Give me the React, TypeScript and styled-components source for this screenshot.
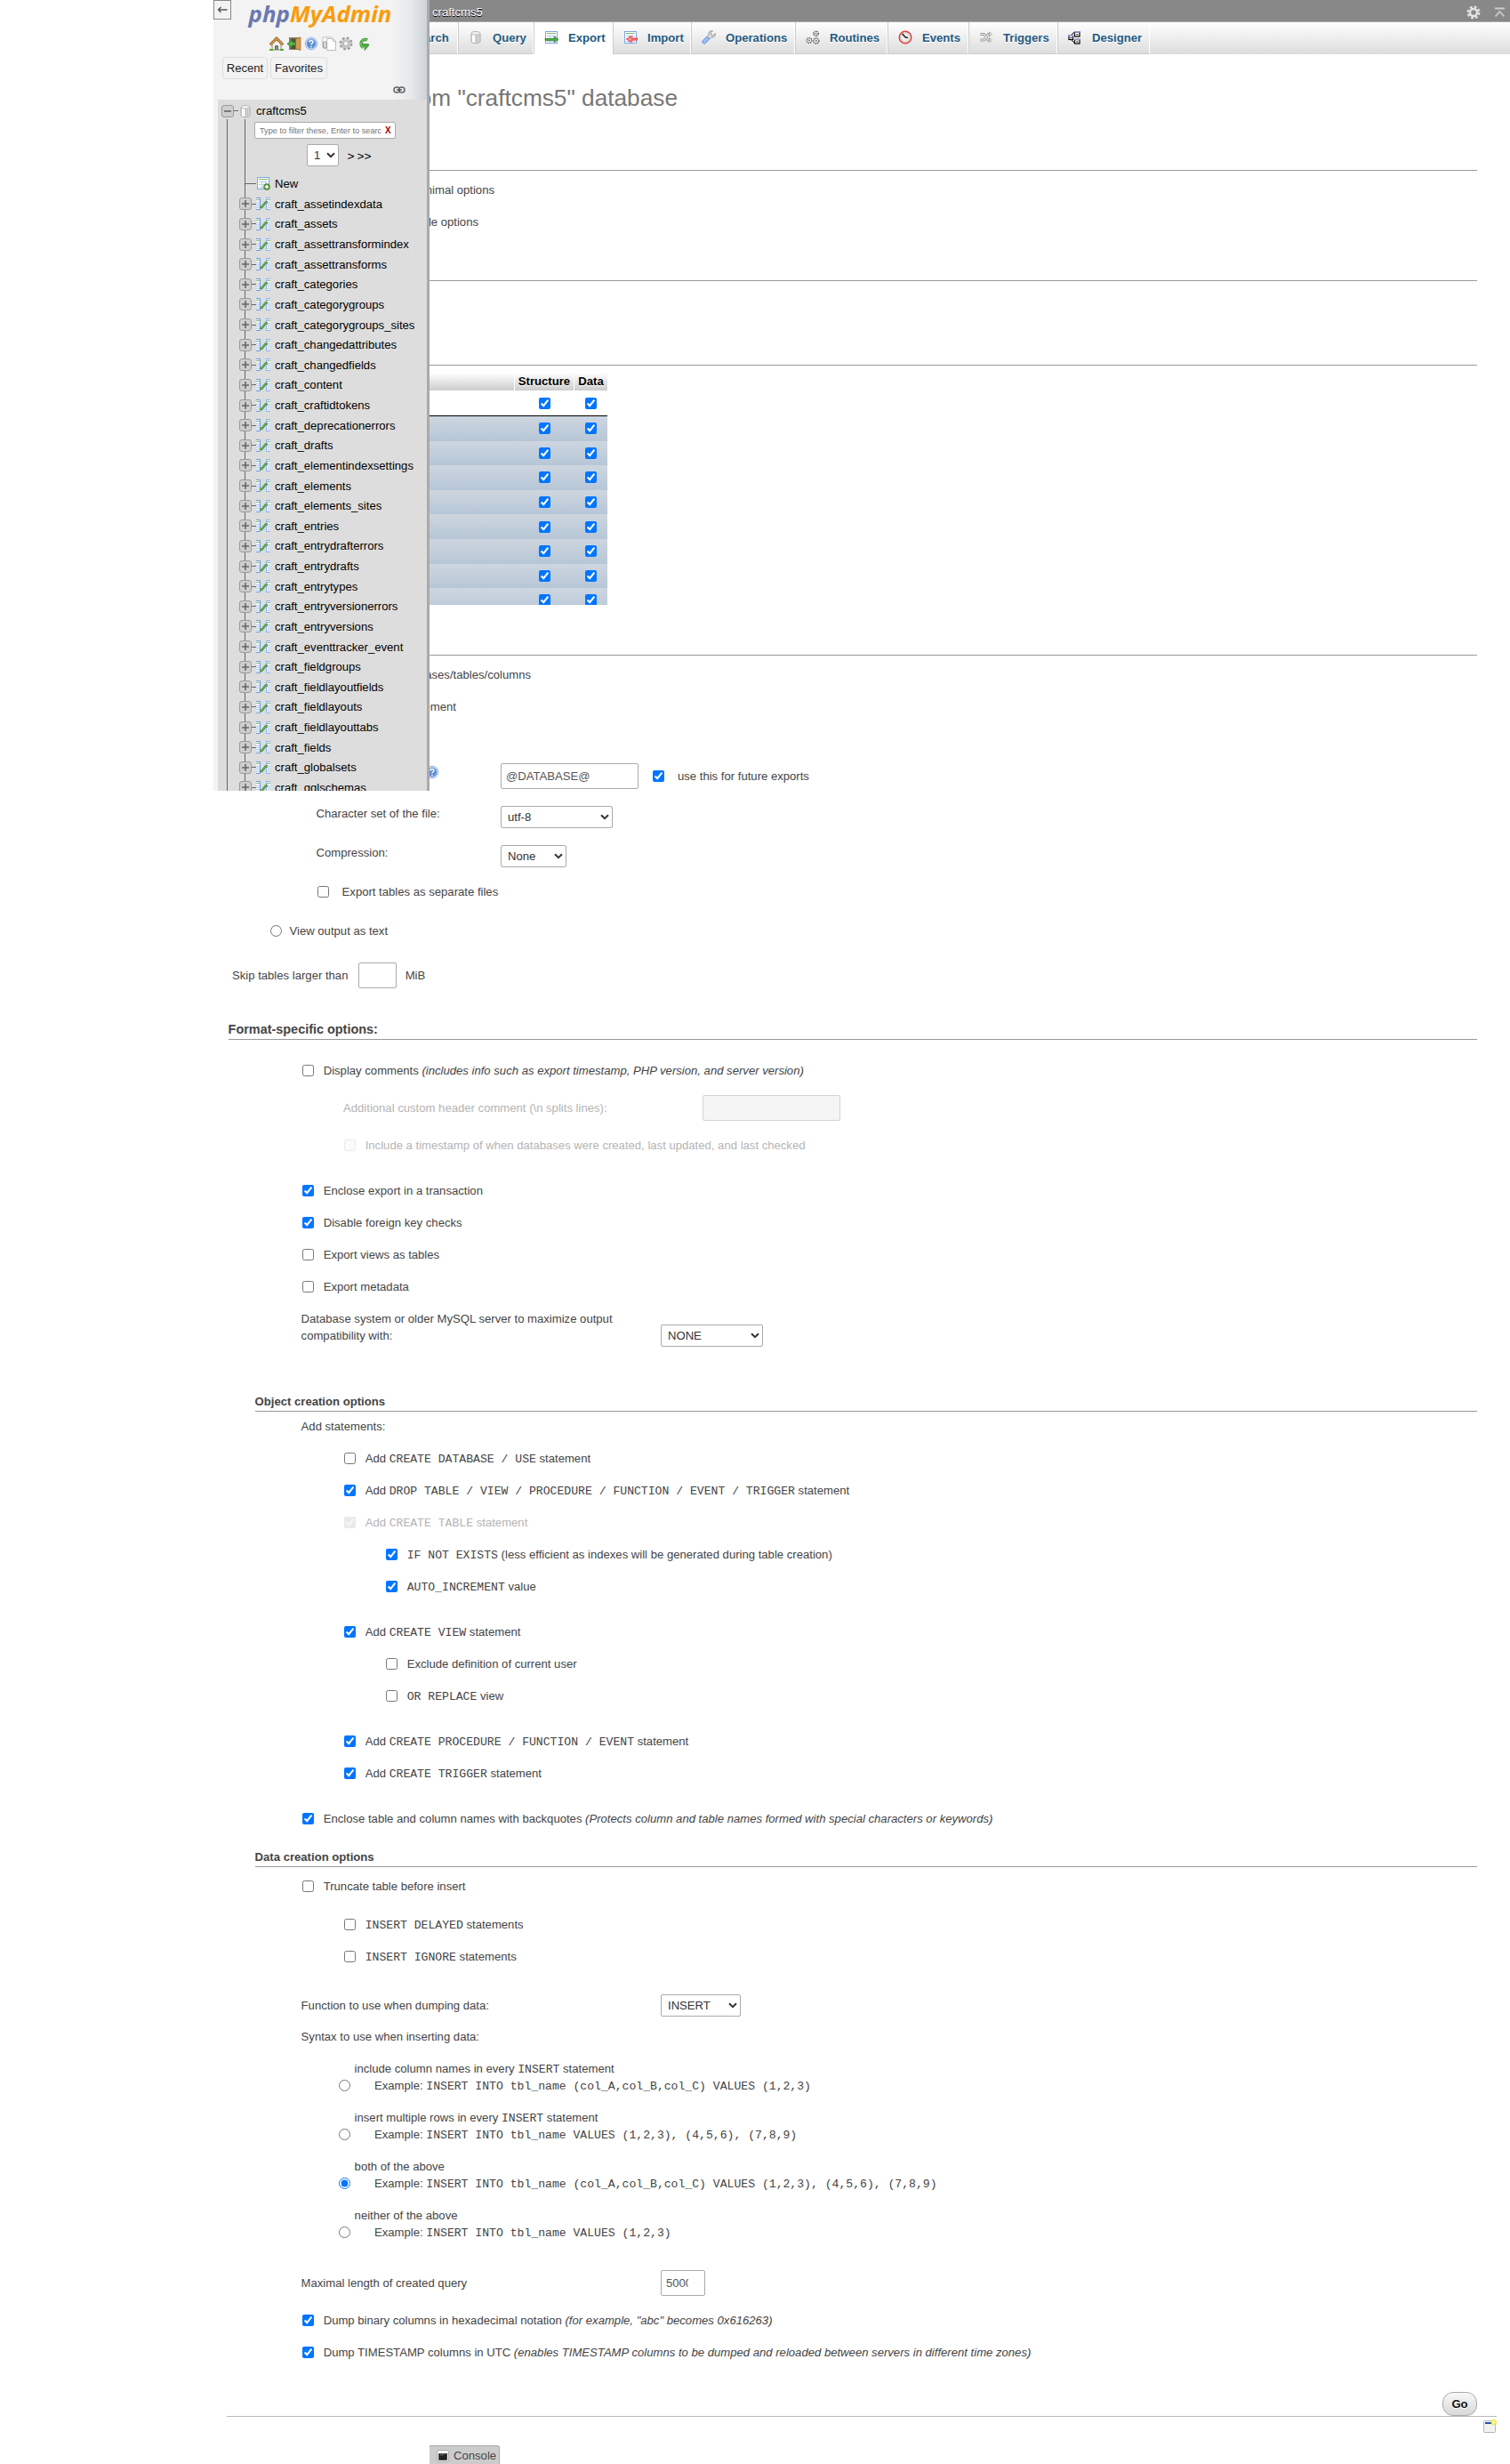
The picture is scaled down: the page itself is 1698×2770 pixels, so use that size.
import React from "react";
import styled, { createGlobalStyle } from "styled-components";

const GlobalStyle = createGlobalStyle`
  * { box-sizing: border-box; }
  html, body { margin: 0; background: #fff; }
  body {
    font-family: "Liberation Sans", Arial, Helvetica, sans-serif;
    font-size: 13.12px;
    color: #444;
    overflow-x: hidden;
  }
  input { margin: 0; font-family: inherit; }
`;

/* ---------- page shell ---------- */

const Page = styled.div`
  position: relative;
  width: 1698px;
  height: 2770px;
  padding-left: 240px;
  overflow: hidden;
  background: #fff;
`;

const TopBar = styled.header`
  display: flex;
  align-items: center;
  justify-content: space-between;
  height: 25px;
  padding: 3px 5px 0 246px;
  background: #888;
  border-bottom: 1px solid #aaa;
  color: #fff;
  text-shadow: 0 1px 0 #000;
`;

const TopIcons = styled.div`
  display: flex;
  align-items: center;
  gap: 15px;
`;

const TabBar = styled.nav`
  display: flex;
  height: 36px;
  padding-left: 182px;
  background: linear-gradient(#fff, #dcdcdc);
`;

const Tab = styled.a<{ $w: number; $active?: boolean }>`
  display: flex;
  align-items: center;
  gap: 11px;
  flex: none;
  width: ${(p) => p.$w}px;
  padding: 0 0 1px 11px;
  border-left: 1px solid #ccc;
  border-right: 1px solid #fff;
  border-bottom: 1px solid ${(p) => (p.$active ? "#fff" : "#ccc")};
  background: ${(p) => (p.$active ? "#fff" : "transparent")};
  color: #235a81;
  font-weight: bold;
  text-shadow: 0 1px 0 #fff;
  white-space: nowrap;
`;

const Content = styled.main`
  display: flex;
  flex-direction: column;
  padding-right: 37px;
`;

const Title = styled.h2`
  width: 522px;
  height: 31px;
  margin: 34px 0 0;
  font-size: 26.24px;
  line-height: 31px;
  font-weight: normal;
  color: #777;
  text-align: right;
  white-space: nowrap;
`;

const Rule = styled.hr<{ $mt: number }>`
  flex: none;
  width: 1404px;
  height: 1px;
  margin: ${(p) => p.$mt}px 0 0 17px;
  border: 0;
  background: #999;
`;

const TailLabel = styled.div<{ $mt: number; $end: number }>`
  width: ${(p) => p.$end}px;
  height: 21px;
  margin-top: ${(p) => p.$mt}px;
  line-height: 21px;
  text-align: right;
  white-space: nowrap;
`;

/* ---------- form rows ---------- */

const Row = styled.div<{ $x: number; $mt?: number; $h?: number; $align?: string }>`
  display: flex;
  flex: none;
  align-items: ${(p) => p.$align ?? "center"};
  height: ${(p) => p.$h ?? 21}px;
  margin-top: ${(p) => p.$mt ?? 15}px;
  padding-left: ${(p) => p.$x}px;
  white-space: nowrap;
`;

const Label = styled.label<{ $w?: number; $muted?: boolean; $raise?: boolean }>`
  flex: none;
  width: ${(p) => (p.$w ? p.$w + "px" : "auto")};
  margin-top: ${(p) => (p.$raise ? "-1px" : "0")};
  line-height: 19px;
  color: ${(p) => (p.$muted ? "#b4b4b4" : "inherit")};
  white-space: pre;
`;

const Check = styled.input`
  flex: none;
  width: 13px;
  height: 13px;
  &:disabled { opacity: 0.45; }
`;

const OptionLabel = styled(Label)<{ $gap?: number }>`
  margin-left: ${(p) => p.$gap ?? 10.7}px;
`;

const Code = styled.code`
  font-family: "Liberation Mono", "Courier New", monospace;
  font-size: 13.12px;
`;

const Field = styled.div<{ $w: number; $disabled?: boolean }>`
  display: flex;
  flex: none;
  align-items: center;
  width: ${(p) => p.$w}px;
  height: 29px;
  padding: 0 5px;
  border: 1px solid ${(p) => (p.$disabled ? "#d4d4d4" : "#aaa")};
  border-radius: 2px;
  background: ${(p) => (p.$disabled ? "#f5f5f5" : "#fff")};
  color: #555;
`;

const FieldValue = styled.span<{ $w?: number }>`
  width: ${(p) => (p.$w ? p.$w + "px" : "auto")};
  overflow: hidden;
`;

const SelectBox = styled.div<{ $w: number; $pad?: number }>`
  display: flex;
  flex: none;
  align-items: center;
  justify-content: space-between;
  width: ${(p) => p.$w}px;
  height: 25px;
  padding: 0 3px 0 ${(p) => p.$pad ?? 7}px;
  border: 1px solid #aaa;
  border-radius: 2px;
  background: #fff;
  color: #333;
`;

const SectionHead = styled.h3<{ $x: number; $mt: number; $big?: boolean }>`
  flex: none;
  width: ${(p) => 1421 - p.$x}px;
  height: ${(p) => (p.$big ? 23 : 22)}px;
  margin: ${(p) => p.$mt}px 0 0 ${(p) => p.$x}px;
  border-bottom: 1px solid #999;
  font-size: ${(p) => (p.$big ? 14.43 : 13.12)}px;
  line-height: 22px;
  font-weight: bold;
`;

const SyntaxItem = styled.div<{ $mt: number }>`
  display: grid;
  flex: none;
  grid-template-columns: 17.6px 22.4px auto;
  grid-template-rows: 19px 19px;
  align-items: center;
  margin-top: ${(p) => p.$mt}px;
  padding-left: 141px;
  line-height: 19px;
  white-space: nowrap;
`;

const SyntaxName = styled.span`
  grid-column: 2 / 4;
`;

const SyntaxExample = styled.span`
  grid-column: 3;
`;

/* ---------- tables picker ---------- */

const TablesPicker = styled.div`
  flex: none;
  width: 443px;
  height: 261px;
  margin-top: 8px;
  padding-left: 60px;
  overflow: hidden;
`;

const PickerRow = styled.div`
  display: grid;
  grid-template-columns: 279px 67px 37px;
  height: 27.6px;
  background: linear-gradient(#ced6df, #b6c6d7);
`;

const PickerHead = styled(PickerRow)`
  height: 20px;
  background: #fff;
  color: #000;
  font-weight: bold;
  text-align: center;
`;

const PickerHeadCell = styled.div`
  padding-top: 1px;
  border-right: 1px solid #fff;
  background: linear-gradient(#fff, #ccc);
  line-height: 18px;
  text-shadow: 0 1px 0 #fff;
  &:last-child { border-right: 0; }
`;

const PickerAll = styled(PickerRow)`
  height: 29px;
  border-bottom: 1px solid #000;
  background: #fff;
`;

const PickerCell = styled.div`
  display: flex;
  align-items: center;
  justify-content: center;
`;

/* ---------- footer ---------- */

const GoLine = styled.div`
  display: flex;
  flex: none;
  justify-content: flex-end;
  height: 27px;
  margin-top: 34px;
`;

const GoButton = styled.button`
  width: 39px;
  height: 27px;
  padding: 0;
  border: 1px solid #aaa;
  border-radius: 12px;
  background: linear-gradient(#f8f8f8, #d8d8d8);
  color: #111;
  font: bold 13.12px "Liberation Sans", Arial, sans-serif;
  text-shadow: 0 1px 0 #fff;
`;

const Footer = styled.footer`
  display: flex;
  justify-content: flex-end;
  width: 1428px;
  height: 33px;
  margin-left: 15px;
  padding: 3px 0 0;
  border-top: 1px solid #bbb;
`;

const ConsoleTab = styled.div`
  display: flex;
  align-items: center;
  gap: 5px;
  width: 79px;
  height: 21px;
  margin-left: 243px;
  padding: 1px 0 0 8px;
  border-top: 1px solid #aaa;
  border-right: 1px solid #aaa;
  border-radius: 0 3px 0 0;
  background: #ccc;
`;

/* ---------- navigation panel ---------- */

const Sidebar = styled.aside`
  position: absolute;
  left: 240px;
  top: 0;
  width: 243px;
  height: 889px;
  overflow: hidden;
  border-right: 3px solid #aaa;
  background: linear-gradient(to right, #f3f3f3 200px, #e6e9eb 222px, #cdd2d7 240px);
  color: #000;
`;

const SidebarTop = styled.div`
  display: flex;
  height: 37px;
`;

const Collapse = styled.div`
  display: flex;
  align-items: center;
  justify-content: center;
  width: 20px;
  height: 22px;
  border: 1px solid #888;
  background: #f3f3f3;
`;

const LogoBox = styled.div`
  margin-left: 18px;
`;

const IconRow = styled.div`
  display: flex;
  gap: 3.5px;
  height: 20px;
  padding: 4px 0 0 63px;
`;

const ButtonRow = styled.div`
  display: flex;
  gap: 3px;
  padding: 7px 0 0 10px;
`;

const NavButton = styled.div<{ $w: number }>`
  width: ${(p) => p.$w}px;
  height: 25px;
  border: 1px solid #ddd;
  border-radius: 4px;
  line-height: 24px;
  text-align: center;
  color: #222;
`;

const LinkRow = styled.div`
  display: flex;
  justify-content: flex-end;
  height: 23px;
  padding: 8px 24px 0 0;
`;

const Tree = styled.div`
  height: 777px;
  margin-left: 5px;
  padding: 3px 0 0 4px;
  background: #ddd;
`;

const DbRow = styled.div`
  display: flex;
  align-items: center;
  height: 19px;
`;

const Dash = styled.i<{ $w: number }>`
  flex: none;
  width: ${(p) => p.$w}px;
  height: 1px;
  background: #666;
`;

const NodeName = styled.span<{ $ml?: number }>`
  margin-left: ${(p) => p.$ml ?? 5}px;
  white-space: nowrap;
`;

const Toggle = styled.span`
  display: flex;
  flex: none;
  width: 14px;
  height: 14px;
  border: 1px solid #999;
  border-radius: 3px;
  background: #cecece;
`;

const OuterBranch = styled.div`
  margin-left: 6px;
  padding-left: 19px;
  border-left: 1px solid #666;
`;

const InnerBranch = styled.div`
  height: 760px;
  padding-top: 3px;
  border-left: 1px solid #666;
`;

const FilterBox = styled.div`
  display: flex;
  align-items: center;
  width: 159px;
  height: 19px;
  margin-left: 10px;
  padding-left: 5px;
  border: 1px solid #aaa;
  border-radius: 2px;
  background: #fff;
  color: #757575;
  font-size: 9.18px;
`;

const FilterText = styled.span`
  width: 137px;
  overflow: hidden;
  white-space: nowrap;
`;

const FilterClear = styled.b`
  margin-left: 4px;
  color: #a00;
  font-size: 10px;
`;

const Pager = styled.div`
  display: flex;
  align-items: center;
  height: 25px;
  margin: 6px 0 0 69px;
`;

const PagerLink = styled.span<{ $ml: number }>`
  margin-left: ${(p) => p.$ml}px;
  padding-top: 1px;
  font-size: 13.6px;
`;

const NewRow = styled.div`
  display: flex;
  align-items: center;
  height: 22px;
  margin: 8px 0 1px;
`;

const TreeRow = styled.div`
  display: flex;
  align-items: center;
  height: 22.64px;
  margin-left: -7px;
`;

const Svg = styled.svg`
  display: block;
  flex: none;
`;

/* ---------- drawings ---------- */

const Icon = ({ size = 16, children }: { size?: number; children: React.ReactNode }) => (
  <Svg width={size} height={size} viewBox="0 0 16 16" fill="none">
    {children}
  </Svg>
);

const Chevron = () => (
  <Svg width="10" height="7" viewBox="0 0 10 7" fill="none">
    <path d="M1 1.2 L5 5.2 L9 1.2" stroke="#333" strokeWidth="2" />
  </Svg>
);

const Sheet = () => (
  <>
    <rect x="1.5" y="1.5" width="13" height="13" fill="#fff" stroke="#7fa6dc" />
    <path d="M3 3.5h10" stroke="#7dbb6c" />
    <path d="M3 6.5h10M3 9.5h10M3 12.5h10M6.5 5v9M10.5 5v9" stroke="#b9cdec" />
  </>
);

const DbIcon = () => (
  <Icon>
    <path d="M3 3.5v9c0 1.2 2 2 5 2s5-.8 5-2v-9" fill="#d9d9d9" stroke="#aaa" />
    <path d="M4 4v8.5c0 .8 1.5 1.3 3 1.4V5z" fill="#fff" />
    <ellipse cx="8" cy="3.3" rx="5" ry="1.8" fill="#f4f4f4" stroke="#b5b5b5" />
    <path d="M8.5 6v7M10.5 6v7" stroke="#bdbdbd" />
  </Icon>
);

const ExportIcon = () => (
  <Icon>
    <Sheet />
    <path d="M1 9.3h10.500V7l4.500 3.300-4.500 3.300v-2.200H1z" fill="#4fae48" stroke="#2b7a2a" strokeWidth=".7" />
  </Icon>
);

const ImportIcon = () => (
  <Icon>
    <Sheet />
    <path d="M16 9H9V6.500L3.500 10 9 13.500V11h7z" fill="#f59a9a" stroke="#e22" strokeWidth=".9" />
  </Icon>
);

const WrenchIcon = () => (
  <Icon>
    <path d="M15.300 3.500 12.800 5.800 10.500 5l-.4-2.200L12.500.8C9.500 0 7.300 2 8 5L6 7.500l2.500 2.300L11 8c3 .3 5-1.700 4.300-4.500z" fill="#ddd" stroke="#888" strokeWidth=".8" />
    <path d="M6 7 1.300 11.500c-1.600 2 .900 4.600 3 3L8.800 9.800z" fill="#9fbdf3" stroke="#5f86d0" strokeWidth=".9" />
  </Icon>
);

const RoutinesIcon = () => (
  <Icon>
    <g stroke="#444" strokeWidth="1.300" strokeDasharray="1.300 .9" fill="#eee">
      <circle cx="11.500" cy="3.800" r="2.700" />
      <circle cx="4" cy="11.500" r="2.900" />
      <circle cx="11.800" cy="12" r="3" />
    </g>
    <circle cx="11.500" cy="3.800" r="1" fill="#777" />
    <circle cx="4" cy="11.500" r="1" fill="#777" />
    <circle cx="11.800" cy="12" r="1" fill="#777" />
  </Icon>
);

const ClockIcon = () => (
  <Icon>
    <circle cx="8" cy="8" r="6.800" fill="#eee" stroke="#e5403a" strokeWidth="1.500" />
    <circle cx="8" cy="8" r="5.300" stroke="#bbb" strokeWidth=".8" />
    <path d="M4.500 4 8.300 8 11 8.500" stroke="#222" strokeWidth="1.500" />
  </Icon>
);

const TriggersIcon = () => (
  <Icon>
    <path d="M1.500 4.500h4l4.500 6.500h3M1.500 11h4l4.500-6.500h3" stroke="#999" strokeWidth="2.800" />
    <path d="M2 4.500h3.500l4.500 6.500h3M2 11h3.500l4.500-6.500h3" stroke="#eee" strokeWidth="1.200" />
    <path d="m11.500 2 3 2.500-3 2.500zM11.500 8.500l3 2.500-3 2.500z" fill="#eee" stroke="#999" strokeWidth=".8" />
  </Icon>
);

const DesignerIcon = () => (
  <Icon>
    <path d="M3 6 7 2h3M3 10l4 4h3" stroke="#000" />
    <g fill="#fff" stroke="#000" strokeWidth="1.200">
      <rect x="1" y="6" width="4.500" height="4.500" />
      <rect x="7.500" y="2" width="5.500" height="5" />
      <rect x="7.500" y="10.500" width="5.500" height="4.500" />
    </g>
    <path d="M.4 6h5.700M6.900 1.800h6.700M6.900 10.300h6.700" stroke="#99c" strokeWidth="1.800" />
    <path d="M2.600 8.500h1.500M9.300 4.800h2M9.300 13h2" stroke="#000" />
  </Icon>
);

const GearIcon = ({ light }: { light?: boolean }) => (
  <Icon>
    <circle cx="8" cy="8" r="6.200" stroke={light ? "#e4e4e4" : "#999"} strokeWidth="2.600" strokeDasharray="2.600 2.270" />
    <circle cx="8" cy="8" r="4" stroke={light ? "#e4e4e4" : "#aaa"} strokeWidth={light ? 2.4 : 3.2} />
    {!light && <circle cx="8" cy="8" r="4.300" stroke="#d6d6d6" strokeWidth="1.400" />}
  </Icon>
);

const ToTopIcon = () => (
  <Svg width="13" height="12" viewBox="0 0 13 12" fill="none">
    <path d="M1 1.500h11M1.500 10.500l5-5.500 5 5.500" stroke="#ccc" strokeWidth="1.800" />
  </Svg>
);

const HelpIcon = () => (
  <Icon>
    <circle cx="8" cy="8" r="6.800" fill="#c9daf2" stroke="#8aa8d8" strokeWidth=".8" />
    <circle cx="8" cy="8" r="5.200" fill="#5c8fd6" />
    <path d="M6 6.500c0-2.600 4-2.500 4-.2 0 1.500-2 1.400-2 3M8 10.700v1.500" stroke="#fff" strokeWidth="1.500" />
  </Icon>
);

const HomeIcon = () => (
  <Icon>
    <path d="M3 8v7h10V8L8 3.500z" fill="#f3f0e8" stroke="#8a8a7a" />
    <path d="M.8 9.300 8 2.200l7.200 7.100" stroke="#8a5a24" strokeWidth="3" />
    <path d="M1.200 8.900 8 2.300l6.800 6.600" stroke="#dc9a52" strokeWidth="1.500" />
    <path d="M6.500 15v-4.500h3V15" fill="#888" stroke="#555" strokeWidth=".8" />
    <path d="M0 15h4M12 15h4" stroke="#57a639" strokeWidth="1.800" />
  </Icon>
);

const ExitIcon = () => (
  <Icon>
    <path d="M2 1h13v14H2z" fill="#8b8162" />
    <path d="M4 2.500h6V14H4z" fill="#4f4f42" />
    <path d="M9.500 3 15 .8v14.700L9.500 14z" fill="#d79b4c" stroke="#a66a22" strokeWidth=".7" />
    <path d="M9 6.500H5.500V4L0 8.200l5.500 4.300V10H9z" fill="#5cb347" stroke="#2f7d27" strokeWidth=".8" />
  </Icon>
);

const DocsIcon = () => (
  <Icon>
    <rect x="1" y=".8" width="10" height="12" rx="1" fill="#fff" stroke="#bbb" />
    <path d="M5.500 2.500h7l3 3v10h-10z" fill="#fff" stroke="#bbb" />
    <path d="M12.500 2.500v3h3" stroke="#bbb" />
    <rect x="1.500" y="6" width="4" height="7" rx="1" fill="#d8d8d8" stroke="#999" />
  </Icon>
);

const RefreshIcon = () => (
  <Icon>
    <path d="M12 4A4.600 4.600 0 1 0 7.500 12.300" stroke="#2f8a2a" strokeWidth="3.400" />
    <path d="M12 4A4.600 4.600 0 1 0 7.500 12.300" stroke="#71c45e" strokeWidth="2" />
    <path d="M6.500 8.500H13.500V10.500L9 15.500v-3.500z" fill="#4fae40" stroke="#2f8a2a" strokeWidth=".7" />
  </Icon>
);

const LinkIcon = () => (
  <Svg width="14" height="8" viewBox="0 0 14 8" fill="none">
    <rect x="1" y="1" width="6.500" height="6" rx="3" stroke="#666" strokeWidth="1.600" />
    <rect x="6.500" y="1" width="6.500" height="6" rx="3" stroke="#666" strokeWidth="1.600" />
    <path d="M4 4h6" stroke="#555" strokeWidth="1.400" />
  </Svg>
);

const NewTableIcon = () => (
  <Icon>
    <Sheet />
    <circle cx="12" cy="12" r="3.500" fill="#5a9a35" stroke="#3d7a20" strokeWidth=".6" />
    <path d="M12 9.900v4.200M9.900 12h4.200" stroke="#fff" strokeWidth="1.500" />
  </Icon>
);

const TableIcon = () => (
  <Icon>
    <path d="M0 1.500h4.500v13H0" fill="#eef3fc" stroke="#6f9bdb" />
    <path d="M16 1.500h-4.500v13H16" fill="#eef3fc" stroke="#8fb2e6" />
    <path d="M0 3.500h4M12 3.500h4" stroke="#8cc27c" />
    <path d="M0 6.500h4M0 8.500h4M0 10.500h4M0 12.500h4M13 6.500h3M13 8.500h3M13 10.500h3M13 12.500h3" stroke="#bccfee" />
    <path d="M4 12h2.300l4.400-5.500h2.300" stroke="#3d8a3d" strokeWidth="2.400" />
    <path d="M4 12h2.300l4.400-5.500h2.300" stroke="#6bb45e" strokeWidth="1.200" />
  </Icon>
);

const PlusMinus = ({ open }: { open?: boolean }) => (
  <Toggle>
    <Svg width="12" height="12" viewBox="0 0 12 12">
      <path d={open ? "M2 6h8" : "M2 6h8M6 2v8"} stroke="#666" strokeWidth="1.600" />
    </Svg>
  </Toggle>
);

const WindowIcon = () => (
  <Icon>
    <rect x="1.500" y="1.500" width="13" height="13" rx="1" fill="#f2f2f0" stroke="#b5b5b0" />
    <path d="M3 4h9" stroke="#1f56a8" strokeWidth="2" />
    <circle cx="12.800" cy="3" r="2.300" fill="#fff" stroke="#f3ea2a" strokeWidth="1.700" />
  </Icon>
);

const ConsoleIcon = () => (
  <Icon size={14}>
    <rect x=".8" y=".8" width="14.400" height="14.400" rx="1" fill="#fff" stroke="#999" />
    <path d="M2.500 4.500h11v9h-11z" fill="#222" />
    <path d="M2.500 4.500h11L6 8z" fill="#555" />
  </Icon>
);

const Logo = () => (
  <Svg width="166" height="36" viewBox="0 0 166 36">
    <text
      x="1.500"
      y="25.300"
      fontFamily="'Open Sans', 'Noto Sans', sans-serif"
      fontSize="25"
      fontWeight="700"
      fontStyle="italic"
      textLength="161"
      lengthAdjust="spacingAndGlyphs"
    >
      <tspan fill="#6c78af">php</tspan>
      <tspan fill="#f89c0e">MyAdmin</tspan>
    </text>
  </Svg>
);

/* ---------- composed parts ---------- */

const tables = [
  "craft_assetindexdata", "craft_assets", "craft_assettransformindex", "craft_assettransforms",
  "craft_categories", "craft_categorygroups", "craft_categorygroups_sites", "craft_changedattributes",
  "craft_changedfields", "craft_content", "craft_craftidtokens", "craft_deprecationerrors",
  "craft_drafts", "craft_elementindexsettings", "craft_elements", "craft_elements_sites",
  "craft_entries", "craft_entrydrafterrors", "craft_entrydrafts", "craft_entrytypes",
  "craft_entryversionerrors", "craft_entryversions", "craft_eventtracker_event", "craft_fieldgroups",
  "craft_fieldlayoutfields", "craft_fieldlayouts", "craft_fieldlayouttabs", "craft_fields",
  "craft_globalsets", "craft_gqlschemas",
];

type OptionProps = {
  x: number;
  mt?: number;
  on?: boolean;
  off?: boolean;
  radio?: boolean;
  gap?: number;
  children: React.ReactNode;
};

const Option = ({ x, mt, on, off, radio, gap, children }: OptionProps) => (
  <Row $x={x} $mt={mt}>
    <Check type={radio ? "radio" : "checkbox"} defaultChecked={on} disabled={off} />
    <OptionLabel $gap={gap} $muted={off}>{children}</OptionLabel>
  </Row>
);

const Select = ({ w, pad, children }: { w: number; pad?: number; children: React.ReactNode }) => (
  <SelectBox $w={w} $pad={pad}>
    <span>{children}</span>
    <Chevron />
  </SelectBox>
);

const Syntax = ({ mt, on, name, example }: { mt: number; on?: boolean; name: React.ReactNode; example: string }) => (
  <SyntaxItem $mt={mt}>
    <span />
    <SyntaxName>{name}</SyntaxName>
    <Check type="radio" defaultChecked={on} />
    <span />
    <SyntaxExample>Example: <Code>{example}</Code></SyntaxExample>
  </SyntaxItem>
);

const Navigation = () => (
  <Sidebar>
    <SidebarTop>
      <Collapse>
        <Svg width="12" height="8" viewBox="0 0 12 8" fill="none">
          <path d="M11.500 4H2M4.500 1 1.500 4l3 3" stroke="#555" strokeWidth="1.400" />
        </Svg>
      </Collapse>
      <LogoBox><Logo /></LogoBox>
    </SidebarTop>
    <IconRow>
      <HomeIcon />
      <ExitIcon />
      <HelpIcon />
      <DocsIcon />
      <GearIcon />
      <RefreshIcon />
    </IconRow>
    <ButtonRow>
      <NavButton $w={51}>Recent</NavButton>
      <NavButton $w={64}>Favorites</NavButton>
    </ButtonRow>
    <LinkRow><LinkIcon /></LinkRow>
    <Tree>
      <DbRow>
        <PlusMinus open />
        <Dash $w={5} />
        <DbIcon />
        <NodeName $ml={4}>craftcms5</NodeName>
      </DbRow>
      <OuterBranch>
        <InnerBranch>
          <FilterBox>
            <FilterText>Type to filter these, Enter to search</FilterText>
            <FilterClear>X</FilterClear>
          </FilterBox>
          <Pager>
            <Select w={36}>1</Select>
            <PagerLink $ml={9.5}>&gt;</PagerLink>
            <PagerLink $ml={3}>&gt;&gt;</PagerLink>
          </Pager>
          <NewRow>
            <Dash $w={12} />
            <NewTableIcon />
            <NodeName>New</NodeName>
          </NewRow>
          {tables.map((name) => (
            <TreeRow key={name}>
              <PlusMinus />
              <Dash $w={5} />
              <TableIcon />
              <NodeName>{name}</NodeName>
            </TreeRow>
          ))}
        </InnerBranch>
      </OuterBranch>
    </Tree>
  </Sidebar>
);

const tabs = [
  { name: "Search", w: 93, icon: null },
  { name: "Query", w: 85, icon: <DbIcon /> },
  { name: "Export", w: 89, icon: <ExportIcon />, active: true },
  { name: "Import", w: 88, icon: <ImportIcon /> },
  { name: "Operations", w: 117, icon: <WrenchIcon /> },
  { name: "Routines", w: 104, icon: <RoutinesIcon /> },
  { name: "Events", w: 91, icon: <ClockIcon /> },
  { name: "Triggers", w: 100, icon: <TriggersIcon /> },
  { name: "Designer", w: 104, icon: <DesignerIcon /> },
];

export default function App() {
  return (
    <Page>
      <GlobalStyle />
      <TopBar>
        <span>craftcms5</span>
        <TopIcons>
          <GearIcon light />
          <ToTopIcon />
        </TopIcons>
      </TopBar>
      <TabBar>
        {tabs.map((t) => (
          <Tab key={t.name} $w={t.w} $active={t.active}>
            {t.icon ?? <Icon><circle cx="7" cy="7" r="5" stroke="#999" /></Icon>}
            {t.name}
          </Tab>
        ))}
      </TabBar>

      <Content>
        <Title>from "craftcms5" database</Title>
        <Rule $mt={65} />
        <TailLabel $mt={11} $end={316}>minimal options</TailLabel>
        <TailLabel $mt={15} $end={298}>possible options</TailLabel>
        <Rule $mt={55} />
        <Rule $mt={94} />

        <TablesPicker>
          <PickerHead>
            <PickerHeadCell />
            <PickerHeadCell>Structure</PickerHeadCell>
            <PickerHeadCell>Data</PickerHeadCell>
          </PickerHead>
          <PickerAll>
            <span />
            <PickerCell><Check type="checkbox" defaultChecked /></PickerCell>
            <PickerCell><Check type="checkbox" defaultChecked /></PickerCell>
          </PickerAll>
          {tables.slice(0, 8).map((name) => (
            <PickerRow key={name}>
              <span />
              <PickerCell><Check type="checkbox" defaultChecked /></PickerCell>
              <PickerCell><Check type="checkbox" defaultChecked /></PickerCell>
            </PickerRow>
          ))}
        </TablesPicker>

        <Rule $mt={56} />
        <TailLabel $mt={11} $end={357}>databases/tables/columns</TailLabel>
        <TailLabel $mt={15} $end={273}>statement</TailLabel>

        <Row $x={238} $mt={53} $h={29}>
          <Row $x={0} $mt={0} $h={25} $align="flex-start"><HelpIcon /></Row>
          <OptionLabel $gap={69} />
          <Field $w={155}><FieldValue>@DATABASE@</FieldValue></Field>
          <OptionLabel $gap={16} />
          <Check type="checkbox" defaultChecked />
          <OptionLabel $gap={15}>use this for future exports</OptionLabel>
        </Row>
        <Row $x={115.5} $mt={19} $h={25} $align="flex-start">
          <Label $w={207.5} $raise>Character set of the file:</Label>
          <Select w={126}>utf-8</Select>
        </Row>
        <Row $x={115.5} $mt={19} $h={25} $align="flex-start">
          <Label $w={207.5} $raise>Compression:</Label>
          <Select w={74}>None</Select>
        </Row>
        <Option x={117} mt={17} gap={14.6}>Export tables as separate files</Option>
        <Option x={64} mt={23} gap={8.5} radio>View output as text</Option>
        <Row $x={21} $mt={25} $h={29}>
          <Label $w={142}>Skip tables larger than</Label>
          <Field $w={43} />
          <OptionLabel $gap={9.7}>MiB</OptionLabel>
        </Row>

        <SectionHead $x={16.6} $mt={35} $big>Format-specific options:</SectionHead>
        <Option x={100} mt={24}>Display comments <i>(includes info such as export timestamp, PHP version, and server version)</i></Option>
        <Row $x={146} $mt={17} $h={29}>
          <Label $w={404} $muted>Additional custom header comment (\n splits lines):</Label>
          <Field $w={155} $disabled />
        </Row>
        <Option x={147} mt={17} off>Include a timestamp of when databases were created, last updated, and last checked</Option>
        <Option x={100} mt={30} on>Enclose export in a transaction</Option>
        <Option x={100} on>Disable foreign key checks</Option>
        <Option x={100}>Export views as tables</Option>
        <Option x={100}>Export metadata</Option>
        <Row $x={98.6} $mt={16} $h={41} $align="flex-end">
          <Row $x={0} $mt={0} $h={41} $align="flex-start">
            <Label $w={404.4}>{"Database system or older MySQL server to maximize output\ncompatibility with:"}</Label>
          </Row>
          <Select w={115}>NONE</Select>
        </Row>

        <SectionHead $x={46.6} $mt={51}>Object creation options</SectionHead>
        <Row $x={98.6} $mt={6}><Label>Add statements:</Label></Row>
        <Option x={147}>Add <Code>CREATE DATABASE / USE</Code> statement</Option>
        <Option x={147} on>Add <Code>DROP TABLE / VIEW / PROCEDURE / FUNCTION / EVENT / TRIGGER</Code> statement</Option>
        <Option x={147} on off>Add <Code>CREATE TABLE</Code> statement</Option>
        <Option x={194} on><Code>IF NOT EXISTS</Code> (less efficient as indexes will be generated during table creation)</Option>
        <Option x={194} on><Code>AUTO_INCREMENT</Code> value</Option>
        <Option x={147} mt={30} on>Add <Code>CREATE VIEW</Code> statement</Option>
        <Option x={194}>Exclude definition of current user</Option>
        <Option x={194}><Code>OR REPLACE</Code> view</Option>
        <Option x={147} mt={30} on>Add <Code>CREATE PROCEDURE / FUNCTION / EVENT</Code> statement</Option>
        <Option x={147} on>Add <Code>CREATE TRIGGER</Code> statement</Option>
        <Option x={100} mt={30} on>Enclose table and column names with backquotes <i>(Protects column and table names formed with special characters or keywords)</i></Option>

        <SectionHead $x={46.6} $mt={22}>Data creation options</SectionHead>
        <Option x={100} mt={11}>Truncate table before insert</Option>
        <Option x={147} mt={22}><Code>INSERT DELAYED</Code> statements</Option>
        <Option x={147}><Code>INSERT IGNORE</Code> statements</Option>
        <Row $x={98.6} $mt={32} $h={25}>
          <Label $w={404.4}>Function to use when dumping data:</Label>
          <Select w={90}>INSERT</Select>
        </Row>
        <Row $x={98.6} $mt={12}><Label>Syntax to use when inserting data:</Label></Row>
        <Syntax mt={16} name={<>include column names in every <Code>INSERT</Code> statement</>} example="INSERT INTO tbl_name (col_A,col_B,col_C) VALUES (1,2,3)" />
        <Syntax mt={17} name={<>insert multiple rows in every <Code>INSERT</Code> statement</>} example="INSERT INTO tbl_name VALUES (1,2,3), (4,5,6), (7,8,9)" />
        <Syntax mt={17} on name="both of the above" example="INSERT INTO tbl_name (col_A,col_B,col_C) VALUES (1,2,3), (4,5,6), (7,8,9)" />
        <Syntax mt={17} name="neither of the above" example="INSERT INTO tbl_name VALUES (1,2,3)" />
        <Row $x={98.6} $mt={33} $h={29}>
          <Label $w={404.4}>Maximal length of created query</Label>
          <Field $w={50}><FieldValue $w={25}>50000</FieldValue></Field>
        </Row>
        <Option x={100} mt={17} on>Dump binary columns in hexadecimal notation <i>(for example, "abc" becomes 0x616263)</i></Option>
        <Option x={100} on>Dump TIMESTAMP columns in UTC <i>(enables TIMESTAMP columns to be dumped and reloaded between servers in different time zones)</i></Option>

        <GoLine><GoButton>Go</GoButton></GoLine>
      </Content>
      <Footer><WindowIcon /></Footer>
      <ConsoleTab>
        <ConsoleIcon />
        Console
      </ConsoleTab>
      <Navigation />
    </Page>
  );
}
